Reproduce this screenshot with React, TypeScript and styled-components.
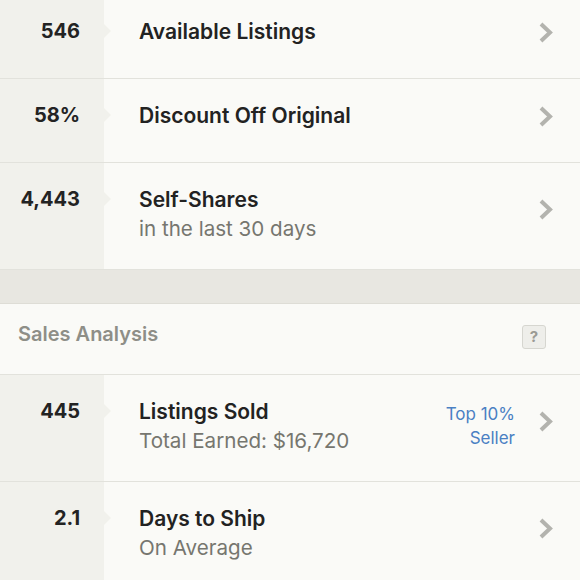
import { FC } from "react";
import styled, { createGlobalStyle } from "styled-components";

const GlobalStyle = createGlobalStyle`
  html, body {
    margin: 0;
    padding: 0;
    background: #fafaf7;
    font-family: 'Inter', 'Open Sans', sans-serif;
  }
`;

const Wrapper = styled.div`
  width: 580px;
  height: 580px;
  overflow: hidden;
  display: flex;
  flex-direction: column;
  background: #fafaf7;
`;

const List = styled.div<{ $offset?: number }>`
  display: flex;
  flex-direction: column;
  margin-top: ${(p) => p.$offset ?? 0}px;
`;

const Row = styled.div<{ $minHeight?: number }>`
  display: flex;
  box-sizing: border-box;
  min-height: ${(p) => p.$minHeight ?? 0}px;
  border-bottom: 1px solid #e2e2dc;
  flex-shrink: 0;
`;

const NumberCell = styled.div`
  width: 104px;
  flex-shrink: 0;
  box-sizing: border-box;
  background: #f1f1ec;
  padding: 24px 24px 0 0;
  text-align: right;
  font-size: 20px;
  font-weight: 700;
  line-height: 24px;
  color: #232323;
`;

const Body = styled.div`
  flex: 1;
  position: relative;
  display: flex;
  align-items: flex-start;
  padding: 25px 27px 28px 35px;

  &::before {
    content: "";
    position: absolute;
    left: 0;
    top: 29px;
    border-top: 7px solid transparent;
    border-bottom: 7px solid transparent;
    border-left: 7px solid #f1f1ec;
  }
`;

const TextBlock = styled.div`
  flex: 1;
  display: flex;
  flex-direction: column;
  gap: 5px;
`;

const Title = styled.div`
  font-size: 21px;
  font-weight: 600;
  line-height: 24px;
  color: #222;
`;

const Sub = styled.div`
  font-size: 20.6px;
  font-weight: 400;
  line-height: 24px;
  color: #76766f;
`;

const Badge = styled.div`
  font-size: 17px;
  line-height: 24px;
  color: #4a80c3;
  text-align: right;
  margin: 2px 24px 0 0;
`;

const ChevronBox = styled.div<{ $shift?: number }>`
  width: 14px;
  height: 21px;
  display: flex;
  margin-top: ${(p) => p.$shift ?? 0}px;
`;

const Band = styled.div`
  height: 33px;
  flex-shrink: 0;
  background: #e8e7e1;
  border-bottom: 1px solid #deddd6;
`;

const SectionHeader = styled.div`
  height: 71px;
  box-sizing: border-box;
  display: flex;
  align-items: center;
  justify-content: space-between;
  padding: 0 34px 10px 18px;
  border-bottom: 1px solid #e2e2dc;
  flex-shrink: 0;
`;

const SectionTitle = styled.div`
  font-size: 20px;
  font-weight: 600;
  color: #8e8e87;
`;

const HelpButton = styled.div`
  width: 24px;
  height: 24px;
  box-sizing: border-box;
  border: 1px solid #d6d6d0;
  border-radius: 3px;
  background: #eeeeea;
  display: flex;
  align-items: center;
  justify-content: center;
  font-size: 15px;
  font-weight: 700;
  color: #9a9a94;
  margin-top: 5px;
`;

const Chevron: FC<{ shift?: number }> = ({ shift }) => (
  <ChevronBox $shift={shift}>
    <svg width="14" height="21" viewBox="0 0 14 21">
      <polyline points="2,2 11,10.5 2,19" fill="none" stroke="#b3b3ae" strokeWidth="4" />
    </svg>
  </ChevronBox>
);

type Stat = { value: string; title: string; sub?: string; badge?: string[] };

const StatRow: FC<{ stat: Stat }> = ({ stat }) => (
  <Row $minHeight={84}>
    <NumberCell>{stat.value}</NumberCell>
    <Body>
      <TextBlock>
        <Title>{stat.title}</Title>
        {stat.sub && <Sub>{stat.sub}</Sub>}
      </TextBlock>
      {stat.badge && (
        <Badge>
          {stat.badge.map((b) => (
            <div key={b}>{b}</div>
          ))}
        </Badge>
      )}
      <Chevron shift={stat.sub ? 11 : 2} />
    </Body>
  </Row>
);

const listing: Stat[] = [
  { value: "546", title: "Available Listings" },
  { value: "58%", title: "Discount Off Original" },
  { value: "4,443", title: "Self-Shares", sub: "in the last 30 days" },
];

const sales: Stat[] = [
  { value: "445", title: "Listings Sold", sub: "Total Earned: $16,720", badge: ["Top 10%", "Seller"] },
  { value: "2.1", title: "Days to Ship", sub: "On Average" },
];

const App: FC = () => (
  <Wrapper>
    <GlobalStyle />
    <List $offset={-5}>
      {listing.map((s) => (
        <StatRow key={s.title} stat={s} />
      ))}
    </List>
    <Band />
    <SectionHeader>
      <SectionTitle>Sales Analysis</SectionTitle>
      <HelpButton>?</HelpButton>
    </SectionHeader>
    <List>
      {sales.map((s) => (
        <StatRow key={s.title} stat={s} />
      ))}
    </List>
  </Wrapper>
);

export default App;
